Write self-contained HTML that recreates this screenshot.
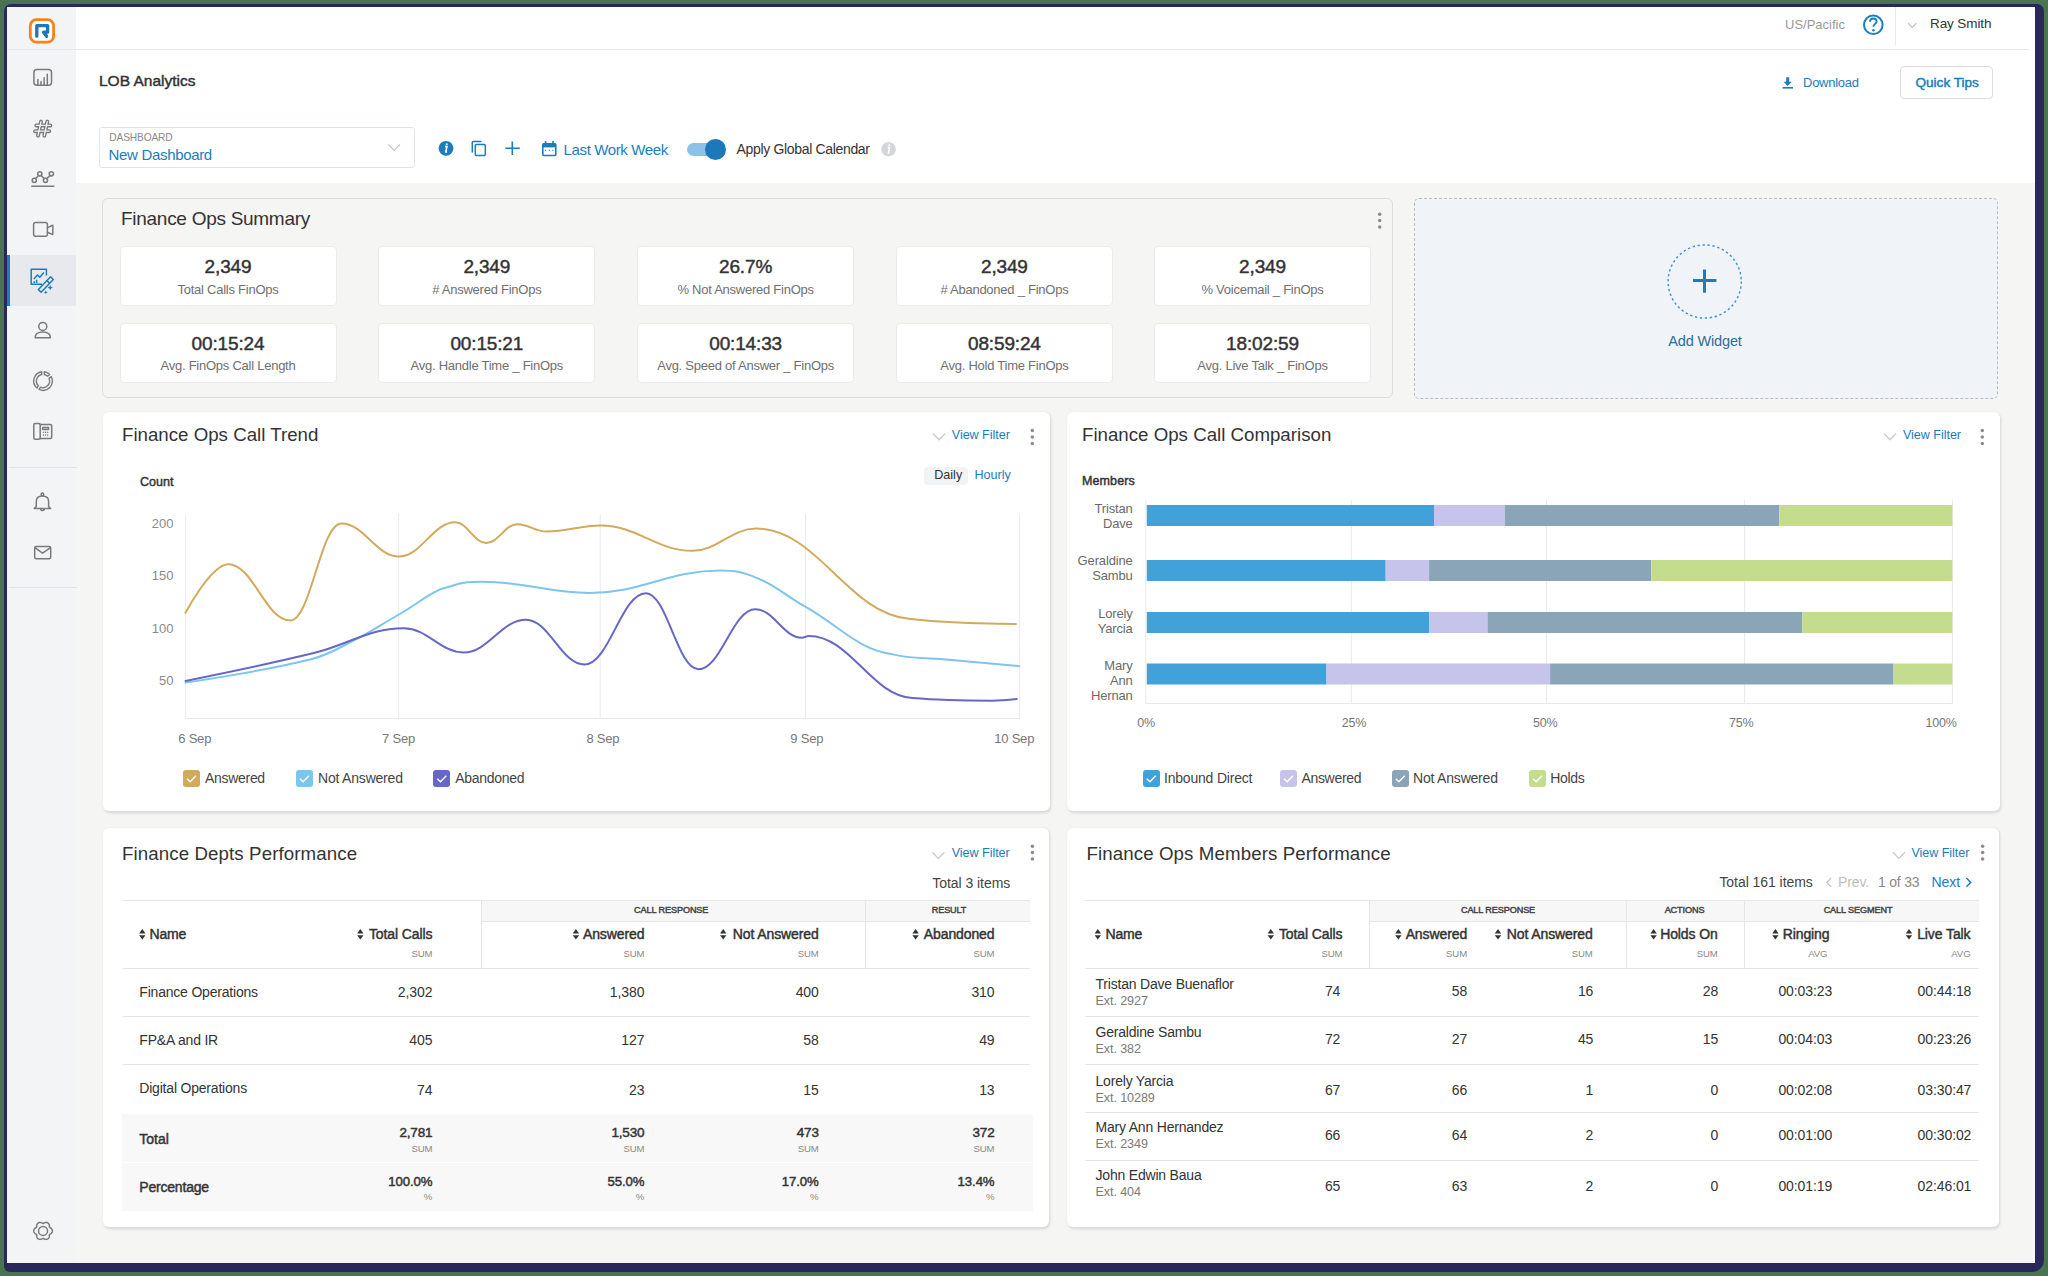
<!DOCTYPE html><html><head><meta charset="utf-8"><style>
html,body{margin:0;padding:0;}
body{width:2048px;height:1276px;overflow:hidden;position:relative;background:#4a7350;font-family:"Liberation Sans",sans-serif;color:#333;}
.t{position:absolute;white-space:nowrap;line-height:1;}
.b{position:absolute;}
svg{position:absolute;left:0;top:0;overflow:visible;}
</style></head><body>
<div class="b" style="left:4px;top:4px;width:2040px;height:1268px;background:#29285a;border-radius:7px 7px 12px 6px;"></div>
<div class="b" style="left:7px;top:7px;width:2028px;height:1256px;background:#f5f5f3;"></div>
<div class="b" style="left:7px;top:7px;width:69px;height:1256px;background:#f3f4f6;"></div>
<div class="b" style="left:7px;top:49px;width:69px;height:1px;background:#e6e8eb;"></div>
<div class="b" style="left:7px;top:255px;width:69px;height:51px;background:#e7e9ec;"></div>
<div class="b" style="left:7px;top:255px;width:3px;height:51px;background:#1a7dc0;"></div>
<div class="b" style="left:9px;top:467px;width:68px;height:1px;background:#e3e5e8;"></div>
<div class="b" style="left:9px;top:587px;width:68px;height:1px;background:#e3e5e8;"></div>
<div class="b" style="left:76px;top:7px;width:1959px;height:176px;background:#ffffff;"></div>
<div class="b" style="left:76px;top:49px;width:1953px;height:1px;background:#e9e9e9;"></div>
<div class="b" style="left:1895px;top:7px;width:1px;height:38px;background:#e9e9e9;"></div>
<svg width="2048" height="1276" style="pointer-events:none">
<rect x="30.3" y="19.7" width="23.3" height="22.5" rx="6.2" fill="#fff" stroke="#f7821b" stroke-width="2.8"/>
<path d="M36.8,36.2 V25.6 H47.6 V32.2 H43.6 L46.6,36.3" fill="none" stroke="#1778bd" stroke-width="3.3" stroke-linecap="round" stroke-linejoin="round"/>
<g fill="none" stroke="#7a7a7a" stroke-width="1.5" stroke-linecap="round" stroke-linejoin="round">
<rect x="33.9" y="69.4" width="17.6" height="15.9" rx="3"/>
<path d="M37.9,85 V79.6 M41,85 V81.4 M44.1,85 V77.7 M47.3,85 V74.3"/>
<path d="M31.8,186.3 H53.8"/>
<circle cx="34.3" cy="180.3" r="2.1"/><circle cx="39.8" cy="173.8" r="2.1"/><circle cx="45.5" cy="180.3" r="2.1"/><circle cx="51.3" cy="173.8" r="2.1"/>
<path d="M35.6,178.6 L38.6,175.5 M41,175.5 L44.3,178.6 M46.7,178.6 L50.1,175.5"/>
<rect x="33.6" y="222.6" width="13.8" height="13.6" rx="2"/>
<path d="M47.4,227.6 L52.8,225.3 V234.6 L47.4,232.2"/>
<circle cx="42.8" cy="326.4" r="4"/>
<path d="M35.2,337.8 C35.2,333.6 38.5,332 42.8,332 C47,332 50.4,333.6 50.4,337.8 Z"/>
<rect x="33.8" y="423.6" width="6.4" height="15.6" rx="1.5"/>
<path d="M40.2,424.6 H50.3 C51.1,424.6 51.7,425.2 51.7,426 V437.2 C51.7,438 51.1,438.6 50.3,438.6 H40.2"/>
<rect x="42.6" y="427.6" width="6" height="1.8" rx="0.5"/>
<path d="M43.5,432.2 V432.4 M45.6,432.2 V432.4 M47.7,432.2 V432.4 M43.5,435 V435.2 M45.6,435 V435.2 M47.7,435 V435.2" stroke-width="1.3"/>
<path d="M34.3,508.6 L36.3,506.4 V501.2 C36.3,497.6 38.6,495.9 42.4,495.9 C46.2,495.9 48.6,497.6 48.6,501.2 V506.4 L50.6,508.6 Z"/>
<circle cx="42.4" cy="494.4" r="1.3"/><path d="M40.7,509.2 A1.8,1.8 0 0 0 44.2,509.2"/>
<rect x="34.7" y="546.4" width="16" height="12.4" rx="1.5"/>
<path d="M34.9,547.6 L42.6,553.2 L50.4,547.6"/>
<path d="M52.35,1230.90 L52.32,1231.30 L52.24,1231.70 L52.11,1232.09 L51.93,1232.47 L51.71,1232.82 L51.45,1233.15 L51.16,1233.46 L50.84,1233.73 L50.50,1233.98 L50.15,1234.21 L49.79,1234.41 L49.46,1234.60 L49.46,1234.98 L49.46,1235.39 L49.44,1235.81 L49.40,1236.23 L49.32,1236.64 L49.20,1237.05 L49.04,1237.44 L48.85,1237.81 L48.62,1238.15 L48.34,1238.46 L48.04,1238.73 L47.70,1238.95 L47.34,1239.13 L46.95,1239.26 L46.55,1239.35 L46.14,1239.38 L45.72,1239.36 L45.30,1239.30 L44.89,1239.20 L44.49,1239.06 L44.10,1238.89 L43.73,1238.70 L43.38,1238.50 L43.05,1238.30 L42.72,1238.50 L42.37,1238.70 L42.00,1238.89 L41.61,1239.06 L41.21,1239.20 L40.80,1239.30 L40.38,1239.36 L39.96,1239.38 L39.55,1239.35 L39.15,1239.26 L38.76,1239.13 L38.40,1238.95 L38.06,1238.73 L37.76,1238.46 L37.48,1238.15 L37.25,1237.81 L37.06,1237.44 L36.90,1237.05 L36.78,1236.64 L36.70,1236.23 L36.66,1235.81 L36.64,1235.39 L36.64,1234.98 L36.64,1234.60 L36.31,1234.41 L35.95,1234.21 L35.60,1233.98 L35.26,1233.73 L34.94,1233.46 L34.65,1233.15 L34.39,1232.82 L34.17,1232.47 L33.99,1232.09 L33.86,1231.70 L33.78,1231.30 L33.75,1230.90 L33.78,1230.50 L33.86,1230.10 L33.99,1229.71 L34.17,1229.33 L34.39,1228.98 L34.65,1228.65 L34.94,1228.34 L35.26,1228.07 L35.60,1227.82 L35.95,1227.59 L36.31,1227.39 L36.64,1227.20 L36.64,1226.82 L36.64,1226.41 L36.66,1225.99 L36.70,1225.57 L36.78,1225.16 L36.90,1224.75 L37.06,1224.36 L37.25,1223.99 L37.48,1223.65 L37.76,1223.34 L38.06,1223.07 L38.40,1222.85 L38.76,1222.67 L39.15,1222.54 L39.55,1222.45 L39.96,1222.42 L40.38,1222.44 L40.80,1222.50 L41.21,1222.60 L41.61,1222.74 L42.00,1222.91 L42.37,1223.10 L42.72,1223.30 L43.05,1223.50 L43.38,1223.30 L43.73,1223.10 L44.10,1222.91 L44.49,1222.74 L44.89,1222.60 L45.30,1222.50 L45.72,1222.44 L46.14,1222.42 L46.55,1222.45 L46.95,1222.54 L47.34,1222.67 L47.70,1222.85 L48.04,1223.07 L48.34,1223.34 L48.62,1223.65 L48.85,1223.99 L49.04,1224.36 L49.20,1224.75 L49.32,1225.16 L49.40,1225.57 L49.44,1225.99 L49.46,1226.41 L49.46,1226.82 L49.46,1227.20 L49.79,1227.39 L50.15,1227.59 L50.50,1227.82 L50.84,1228.07 L51.16,1228.34 L51.45,1228.65 L51.71,1228.98 L51.93,1229.33 L52.11,1229.71 L52.24,1230.10 L52.32,1230.50 L52.35,1230.90Z"/>
<circle cx="43.05" cy="1230.9" r="4.5"/>
</g>
<path d="M44.30,371.79 A9.3,9.3 0 0 1 49.69,374.54 L47.48,376.15 A6.6,6.6 0 0 0 44.29,374.53 Z M51.21,376.64 A9.3,9.3 0 0 1 39.07,389.43 L40.56,387.13 A6.6,6.6 0 0 0 49.00,378.24 Z M36.90,388.02 A9.3,9.3 0 0 1 41.70,371.79 L41.71,374.53 A6.6,6.6 0 0 0 38.39,385.72 Z " fill="none" stroke="#7a7a7a" stroke-width="1.4" stroke-linejoin="round"/>
<g fill="none" stroke="#7a7a7a" stroke-width="4" stroke-linecap="round" stroke-linejoin="round"><path d="M41,121.6 L38,135.6 M47.3,121.6 L44.3,135.6 M36.3,125.4 H50.4 M35.1,131.2 H49.2"/></g>
<g fill="none" stroke="#f3f4f6" stroke-width="1.3" stroke-linecap="round"><path d="M41,121.6 L38,135.6 M47.3,121.6 L44.3,135.6 M36.3,125.4 H50.4 M35.1,131.2 H49.2"/></g>
<g fill="none" stroke="#1b7cc0" stroke-width="1.5" stroke-linejoin="round">
<path d="M42,284.3 H31.2 V269.2 H46.4 V275.5"/>
<path d="M33.8,279 L37.5,275 L39.8,277.2 L43.8,272.5"/>
<path d="M38.4,289.6 L50.6,276.8 L53.3,279.5 L41.1,292.3 Z"/>
<path d="M46.9,280.6 L49.6,283.3"/>
<path d="M34.2,283 V281.2 M36.6,283 V279.8"/>
</g>
<g fill="#1b7cc0"><path d="M50.2,285 l0.8,1.8 1.8,0.8 -1.8,0.8 -0.8,1.8 -0.8,-1.8 -1.8,-0.8 1.8,-0.8z"/><path d="M45.8,290.4 l0.6,1.3 1.3,0.6 -1.3,0.6 -0.6,1.3 -0.6,-1.3 -1.3,-0.6 1.3,-0.6z"/></g>
</svg>
<div class="t" style="top:18.0px;font-size:13px;color:#9a9a9a;left:1785.0px;">US/Pacific</div>
<svg width="2048" height="1276"><g fill="none" stroke="#1a7dc0" stroke-width="2"><circle cx="1873.3" cy="24.8" r="9.3"/>
<path d="M1870,21.8 C1870,19.6 1871.5,18.5 1873.3,18.5 C1875.2,18.5 1876.6,19.7 1876.6,21.5 C1876.6,23.8 1873.4,24 1873.4,26.8" stroke-width="1.9"/></g>
<circle cx="1873.4" cy="30.2" r="1.2" fill="#1a7dc0"/>
<path d="M1908,23 L1912.2,27.5 L1916.4,23" fill="none" stroke="#c4c4c4" stroke-width="1.2"/>
</svg>
<div class="t" style="top:16.6px;font-size:13.5px;letter-spacing:-0.1px;left:1930.0px;">Ray Smith</div>
<div class="t" style="top:72.5px;font-size:15.5px;-webkit-text-stroke:0.45px currentColor;letter-spacing:0px;left:99.0px;">LOB Analytics</div>
<svg width="2048" height="1276"><g fill="#1a7dc0">
<path d="M1786.2,77.2 H1789.2 V81.8 H1791.8 L1787.7,86 L1783.6,81.8 H1786.2 Z"/><rect x="1782.6" y="87" width="10.4" height="1.6"/></g></svg>
<div class="t" style="top:76.0px;font-size:13px;color:#1a7dc0;letter-spacing:-0.25px;left:1803.0px;">Download</div>
<div class="b" style="left:1900px;top:66px;width:93px;height:33px;background:#fff;border:1px solid #dcdcdc;border-radius:4px;box-sizing:border-box;"></div>
<div class="t" style="top:75.8px;font-size:13.6px;color:#1a7dc0;-webkit-text-stroke:0.45px currentColor;letter-spacing:0px;left:1947.2px;transform:translateX(-50%);">Quick Tips</div>
<div class="b" style="left:99px;top:127px;width:316px;height:41px;background:#fff;border:1px solid #dfe4e8;border-radius:3px;box-sizing:border-box;"></div>
<div class="t" style="top:133.4px;font-size:10.2px;color:#8a8a8a;letter-spacing:-0.15px;left:109.3px;">DASHBOARD</div>
<div class="t" style="top:146.9px;font-size:15px;color:#1a7dc0;letter-spacing:-0.33px;left:108.6px;">New Dashboard</div>
<svg width="2048" height="1276">
<path d="M388.4,144.4 L394.2,150.4 L400,144.4" fill="none" stroke="#c7c7c7" stroke-width="1.3"/>
<circle cx="446" cy="148.3" r="7.4" fill="#1a7dc0"/>
<path d="M445.1,146.6 h1.8 l-1.1,5.3 h1.3" fill="none" stroke="#fff" stroke-width="1.6"/><circle cx="446.7" cy="144.3" r="1.05" fill="#fff"/>
<g fill="none" stroke="#1a7dc0" stroke-width="1.5"><rect x="475.3" y="144.6" width="10" height="11" rx="1"/><path d="M472.3,152.6 V142.6 C472.3,142 472.7,141.6 473.3,141.6 H481.5"/></g>
<path d="M512.3,141.4 V155 M505.3,148.2 H519.8" stroke="#1a7dc0" stroke-width="1.6" fill="none"/>
<g fill="none" stroke="#1a7dc0" stroke-width="1.6"><rect x="542.8" y="143.8" width="13" height="11.7" rx="1"/></g>
<rect x="542.8" y="143.8" width="13" height="3.6" fill="#1a7dc0"/>
<path d="M545.6,141 v3 M553,141 v3" stroke="#1a7dc0" stroke-width="1.6"/>
<path d="M545.2,150.3 h1 M548.8,150.3 h1 M552.4,150.3 h1" stroke="#1a7dc0" stroke-width="1.2"/>
</svg>
<div class="t" style="top:142.3px;font-size:15px;color:#1a7dc0;letter-spacing:-0.38px;left:563.6px;">Last Work Week</div>
<div class="b" style="left:687px;top:142.5px;width:36px;height:13.5px;background:#8cc2e8;border-radius:7px;"></div>
<div class="b" style="left:705.4px;top:138.9px;width:21px;height:21px;border-radius:50%;background:#1a78bb;"></div>
<div class="t" style="top:141.9px;font-size:14px;letter-spacing:-0.33px;left:736.5px;">Apply Global Calendar</div>
<svg width="2048" height="1276"><circle cx="888.6" cy="149.2" r="7.3" fill="#d3d6da"/>
<path d="M887.7,147.5 h1.8 l-1.1,5.3 h1.3" fill="none" stroke="#fff" stroke-width="1.5"/><circle cx="889.3" cy="145.3" r="1" fill="#fff"/></svg>
<div class="b" style="left:102px;top:198px;width:1290.5px;height:200px;background:transparent;border:1px solid #dcdde0;border-radius:6px;box-sizing:border-box;"></div>
<div class="t" style="top:208.5px;font-size:19px;letter-spacing:-0.28px;left:121.0px;">Finance Ops Summary</div>
<svg width="2048" height="1276"><g fill="#8c8c8c"><circle cx="1379.7" cy="214.2" r="1.75"/><circle cx="1379.7" cy="220.6" r="1.75"/><circle cx="1379.7" cy="227.0" r="1.75"/></g></svg>
<div class="b" style="left:120.5px;top:247px;width:215.0px;height:58px;background:#fff;border-radius:4px;box-shadow:0 0 0 1px #ebebeb;"></div>
<div class="t" style="top:257.3px;font-size:19px;-webkit-text-stroke:0.45px currentColor;letter-spacing:-0.15px;left:228.0px;transform:translateX(-50%);">2,349</div>
<div class="t" style="top:282.6px;font-size:13px;color:#6f6f6f;letter-spacing:-0.25px;left:228.0px;transform:translateX(-50%);">Total Calls FinOps</div>
<div class="b" style="left:379.3px;top:247px;width:214.99999999999994px;height:58px;background:#fff;border-radius:4px;box-shadow:0 0 0 1px #ebebeb;"></div>
<div class="t" style="top:257.3px;font-size:19px;-webkit-text-stroke:0.45px currentColor;letter-spacing:-0.15px;left:486.8px;transform:translateX(-50%);">2,349</div>
<div class="t" style="top:282.6px;font-size:13px;color:#6f6f6f;letter-spacing:-0.25px;left:486.8px;transform:translateX(-50%);"># Answered FinOps</div>
<div class="b" style="left:638.1px;top:247px;width:215.0px;height:58px;background:#fff;border-radius:4px;box-shadow:0 0 0 1px #ebebeb;"></div>
<div class="t" style="top:257.3px;font-size:19px;-webkit-text-stroke:0.45px currentColor;letter-spacing:-0.15px;left:745.6px;transform:translateX(-50%);">26.7%</div>
<div class="t" style="top:282.6px;font-size:13px;color:#6f6f6f;letter-spacing:-0.25px;left:745.6px;transform:translateX(-50%);">% Not Answered FinOps</div>
<div class="b" style="left:896.9px;top:247px;width:215.0000000000001px;height:58px;background:#fff;border-radius:4px;box-shadow:0 0 0 1px #ebebeb;"></div>
<div class="t" style="top:257.3px;font-size:19px;-webkit-text-stroke:0.45px currentColor;letter-spacing:-0.15px;left:1004.4px;transform:translateX(-50%);">2,349</div>
<div class="t" style="top:282.6px;font-size:13px;color:#6f6f6f;letter-spacing:-0.25px;left:1004.4px;transform:translateX(-50%);"># Abandoned _ FinOps</div>
<div class="b" style="left:1155px;top:247px;width:215px;height:58px;background:#fff;border-radius:4px;box-shadow:0 0 0 1px #ebebeb;"></div>
<div class="t" style="top:257.3px;font-size:19px;-webkit-text-stroke:0.45px currentColor;letter-spacing:-0.15px;left:1262.5px;transform:translateX(-50%);">2,349</div>
<div class="t" style="top:282.6px;font-size:13px;color:#6f6f6f;letter-spacing:-0.25px;left:1262.5px;transform:translateX(-50%);">% Voicemail _ FinOps</div>
<div class="b" style="left:120.5px;top:323.5px;width:215.0px;height:58.0px;background:#fff;border-radius:4px;box-shadow:0 0 0 1px #ebebeb;"></div>
<div class="t" style="top:333.8px;font-size:19px;-webkit-text-stroke:0.45px currentColor;letter-spacing:-0.15px;left:228.0px;transform:translateX(-50%);">00:15:24</div>
<div class="t" style="top:359.1px;font-size:13px;color:#6f6f6f;letter-spacing:-0.25px;left:228.0px;transform:translateX(-50%);">Avg. FinOps Call Length</div>
<div class="b" style="left:379.3px;top:323.5px;width:214.99999999999994px;height:58.0px;background:#fff;border-radius:4px;box-shadow:0 0 0 1px #ebebeb;"></div>
<div class="t" style="top:333.8px;font-size:19px;-webkit-text-stroke:0.45px currentColor;letter-spacing:-0.15px;left:486.8px;transform:translateX(-50%);">00:15:21</div>
<div class="t" style="top:359.1px;font-size:13px;color:#6f6f6f;letter-spacing:-0.25px;left:486.8px;transform:translateX(-50%);">Avg. Handle Time _ FinOps</div>
<div class="b" style="left:638.1px;top:323.5px;width:215.0px;height:58.0px;background:#fff;border-radius:4px;box-shadow:0 0 0 1px #ebebeb;"></div>
<div class="t" style="top:333.8px;font-size:19px;-webkit-text-stroke:0.45px currentColor;letter-spacing:-0.15px;left:745.6px;transform:translateX(-50%);">00:14:33</div>
<div class="t" style="top:359.1px;font-size:13px;color:#6f6f6f;letter-spacing:-0.25px;left:745.6px;transform:translateX(-50%);">Avg. Speed of Answer _ FinOps</div>
<div class="b" style="left:896.9px;top:323.5px;width:215.0000000000001px;height:58.0px;background:#fff;border-radius:4px;box-shadow:0 0 0 1px #ebebeb;"></div>
<div class="t" style="top:333.8px;font-size:19px;-webkit-text-stroke:0.45px currentColor;letter-spacing:-0.15px;left:1004.4px;transform:translateX(-50%);">08:59:24</div>
<div class="t" style="top:359.1px;font-size:13px;color:#6f6f6f;letter-spacing:-0.25px;left:1004.4px;transform:translateX(-50%);">Avg. Hold Time FinOps</div>
<div class="b" style="left:1155px;top:323.5px;width:215px;height:58.0px;background:#fff;border-radius:4px;box-shadow:0 0 0 1px #ebebeb;"></div>
<div class="t" style="top:333.8px;font-size:19px;-webkit-text-stroke:0.45px currentColor;letter-spacing:-0.15px;left:1262.5px;transform:translateX(-50%);">18:02:59</div>
<div class="t" style="top:359.1px;font-size:13px;color:#6f6f6f;letter-spacing:-0.25px;left:1262.5px;transform:translateX(-50%);">Avg. Live Talk _ FinOps</div>
<div class="b" style="left:1413.5px;top:197.5px;width:584.0px;height:201.0px;background:#f0f4f8;border:1px dashed #b9bcc0;border-radius:5px;box-sizing:border-box;"></div>
<svg width="2048" height="1276"><circle cx="1704.7" cy="281.5" r="36.6" fill="none" stroke="#3a96d2" stroke-width="1.5" stroke-dasharray="2.3 2.7"/>
<path d="M1704.5,269.6 V292.8 M1693,280.5 H1716.4" stroke="#1a7dc0" stroke-width="3" fill="none"/></svg>
<div class="t" style="top:333.7px;font-size:14.5px;color:#2c6d9c;letter-spacing:-0.15px;left:1705.0px;transform:translateX(-50%);">Add Widget</div>
<div class="b" style="left:103px;top:412px;width:947px;height:399px;background:#fff;border-radius:6px;box-shadow:1px 1.5px 3px rgba(0,0,0,0.13);"></div>
<div class="b" style="left:1067px;top:412px;width:933px;height:399px;background:#fff;border-radius:6px;box-shadow:1px 1.5px 3px rgba(0,0,0,0.13);"></div>
<div class="b" style="left:103px;top:828px;width:946px;height:399px;background:#fff;border-radius:6px;box-shadow:1px 1.5px 3px rgba(0,0,0,0.13);"></div>
<div class="b" style="left:1067px;top:828px;width:932px;height:399px;background:#fff;border-radius:6px;box-shadow:1px 1.5px 3px rgba(0,0,0,0.13);"></div>
<div class="t" style="top:426.2px;font-size:18.7px;letter-spacing:0px;left:122.0px;">Finance Ops Call Trend</div>
<svg width="2048" height="1276"><path d="M933,433.59999999999997 L939,439.79999999999995 L945,433.59999999999997" fill="none" stroke="#c8c8c8" stroke-width="1.3"/></svg>
<div class="t" style="top:428.7px;font-size:12.6px;color:#1a7dc0;letter-spacing:-0.05px;left:951.8px;">View Filter</div>
<svg width="2048" height="1276"><g fill="#8c8c8c"><circle cx="1032.3" cy="430.6" r="1.75"/><circle cx="1032.3" cy="437.0" r="1.75"/><circle cx="1032.3" cy="443.40000000000003" r="1.75"/></g></svg>
<div class="b" style="left:924.4px;top:467px;width:44.0px;height:17.69999999999999px;background:#f1f3f5;border-radius:4px;"></div>
<div class="t" style="top:469.3px;font-size:12.6px;left:934.2px;">Daily</div>
<div class="t" style="top:469.3px;font-size:12.6px;color:#1a7dc0;left:974.4px;">Hourly</div>
<div class="t" style="top:475.7px;font-size:12.5px;-webkit-text-stroke:0.45px currentColor;letter-spacing:0px;left:140.0px;">Count</div>
<div class="t" style="top:517.4px;font-size:13px;color:#8a8a8a;right:1874.6px;">200</div>
<div class="t" style="top:569.4px;font-size:13px;color:#8a8a8a;right:1874.6px;">150</div>
<div class="t" style="top:622.3px;font-size:13px;color:#8a8a8a;right:1874.6px;">100</div>
<div class="t" style="top:674.0px;font-size:13px;color:#8a8a8a;right:1874.6px;">50</div>
<svg width="2048" height="1276"><g stroke="#e9e9e9" stroke-width="1" fill="none"><path d="M185.6,514 V718.5"/><path d="M398.6,514 V718.5"/><path d="M600.2,514 V718.5"/><path d="M805.4,514 V718.5"/><path d="M1019.7,514 V718.5"/><path d="M185.6,718.5 H1019.7"/></g><g fill="none" stroke-width="2" stroke-linecap="round" stroke-linejoin="round"><path d="M185.5,682.6 C185.5,682.6 260.8,671.8 311.0,659.3 C327.6,655.2 335.8,649.6 352.4,641.2 C371.0,631.7 380.4,624.9 399.0,614.5 C420.1,602.8 430.6,590.3 451.7,586.0 C464.1,581.7 470.4,581.7 482.8,581.7 C525.6,581.7 546.9,592.9 589.7,592.9 C641.8,592.9 667.9,570.5 720.0,570.5 C735.2,570.5 742.7,571.9 757.9,578.3 C776.9,586.3 786.3,596.0 805.3,606.7 C839.9,626.3 857.1,648.9 891.7,654.1 C912.4,659.3 922.7,657.3 943.4,659.3 C973.8,662.2 1019.3,666.2 1019.3,666.2" stroke="#7cc6ee"/><path d="M185.5,612.8 C185.5,612.8 211.2,564.2 228.3,564.2 C253.1,564.2 265.5,620.6 290.3,620.6 C310.7,620.6 320.8,523.4 341.2,523.4 C364.3,523.4 375.9,556.5 399.0,556.5 C421.5,556.5 432.7,522.2 455.2,522.2 C467.6,522.2 473.8,543.0 486.2,543.0 C498.6,543.0 504.8,524.2 517.2,524.2 C529.0,524.2 534.8,531.6 546.6,531.6 C568.3,531.6 579.2,525.6 600.9,525.6 C637.5,525.6 655.8,550.8 692.4,550.8 C717.9,550.8 730.7,528.6 756.2,528.6 C817.3,528.6 847.9,613.6 909.0,618.8 C951.8,624.0 1015.9,624.0 1015.9,624.0" stroke="#d3aa5c"/><path d="M185.5,680.9 C185.5,680.9 261.9,665.6 312.8,653.3 C349.3,644.5 367.6,628.3 404.1,628.3 C428.0,628.3 439.9,652.4 463.8,652.4 C488.6,652.4 501.1,619.7 525.9,619.7 C549.3,619.7 561.1,664.6 584.5,664.6 C609.1,664.6 621.3,593.2 645.9,593.2 C666.9,593.2 677.4,669.2 698.4,669.2 C721.2,669.2 732.5,609.2 755.3,609.2 C773.9,609.2 783.3,637.8 801.9,637.8 C804.7,637.8 806.0,636.0 808.8,636.0 C850.2,636.0 871.0,695.5 912.4,698.1 C944.1,700.7 960.0,700.7 991.7,700.7 C1001.7,700.7 1016.7,699.0 1016.7,699.0" stroke="#6767c6"/></g></svg>
<div class="t" style="top:731.6px;font-size:13px;color:#777;letter-spacing:-0.2px;left:194.7px;transform:translateX(-50%);">6 Sep</div>
<div class="t" style="top:731.6px;font-size:13px;color:#777;letter-spacing:-0.2px;left:398.5px;transform:translateX(-50%);">7 Sep</div>
<div class="t" style="top:731.6px;font-size:13px;color:#777;letter-spacing:-0.2px;left:602.9px;transform:translateX(-50%);">8 Sep</div>
<div class="t" style="top:731.6px;font-size:13px;color:#777;letter-spacing:-0.2px;left:806.8px;transform:translateX(-50%);">9 Sep</div>
<div class="t" style="top:731.6px;font-size:13px;color:#777;letter-spacing:-0.2px;left:1014.2px;transform:translateX(-50%);">10 Sep</div>
<div class="b" style="left:183px;top:770px;width:17px;height:17px;border-radius:3px;background:#d3aa5c;"></div>
<svg width="2048" height="1276"><path d="M187,778.8 L190.2,781.8 L196,775.8" fill="none" stroke="#fff" stroke-width="1.4"/></svg>
<div class="t" style="top:771.4px;font-size:14px;color:#444;letter-spacing:-0.3px;left:205.0px;">Answered</div>
<div class="b" style="left:296px;top:770px;width:17px;height:17px;border-radius:3px;background:#7cc6ee;"></div>
<svg width="2048" height="1276"><path d="M300,778.8 L303.2,781.8 L309,775.8" fill="none" stroke="#fff" stroke-width="1.4"/></svg>
<div class="t" style="top:771.4px;font-size:14px;color:#444;letter-spacing:-0.2px;left:318.0px;">Not Answered</div>
<div class="b" style="left:433.3px;top:770px;width:17px;height:17px;border-radius:3px;background:#6767c6;"></div>
<svg width="2048" height="1276"><path d="M437.3,778.8 L440.5,781.8 L446.3,775.8" fill="none" stroke="#fff" stroke-width="1.4"/></svg>
<div class="t" style="top:771.4px;font-size:14px;color:#444;letter-spacing:-0.3px;left:455.2px;">Abandoned</div>
<div class="t" style="top:426.2px;font-size:18.7px;letter-spacing:0px;left:1082.0px;">Finance Ops Call Comparison</div>
<svg width="2048" height="1276"><path d="M1884,433.59999999999997 L1890,439.79999999999995 L1896,433.59999999999997" fill="none" stroke="#c8c8c8" stroke-width="1.3"/></svg>
<div class="t" style="top:428.7px;font-size:12.6px;color:#1a7dc0;letter-spacing:-0.05px;left:1903.0px;">View Filter</div>
<svg width="2048" height="1276"><g fill="#8c8c8c"><circle cx="1982.3" cy="430.6" r="1.75"/><circle cx="1982.3" cy="437.0" r="1.75"/><circle cx="1982.3" cy="443.40000000000003" r="1.75"/></g></svg>
<div class="t" style="top:474.9px;font-size:12.5px;-webkit-text-stroke:0.45px currentColor;letter-spacing:0.1px;left:1082.0px;">Members</div>
<svg width="2048" height="1276"><g stroke="#e9e9e9" stroke-width="1" fill="none"><path d="M1145.8,499.6 V703.5"/><path d="M1351.3,499.6 V703.5"/><path d="M1546.6,499.6 V703.5"/><path d="M1744.6,499.6 V703.5"/><path d="M1952.4,499.6 V703.5"/><path d="M1145.8,703.5 H1952.4"/></g><rect x="1146.8" y="505" width="287.2" height="21" fill="#43a1d9"/><rect x="1434" y="505" width="70.8" height="21" fill="#c6c4ea"/><rect x="1504.8" y="505" width="274.4" height="21" fill="#8aa5b7"/><rect x="1779.2" y="505" width="173.2" height="21" fill="#c3dc8d"/><rect x="1146.8" y="560" width="238.9" height="21" fill="#43a1d9"/><rect x="1385.7" y="560" width="43.4" height="21" fill="#c6c4ea"/><rect x="1429.1" y="560" width="222.2" height="21" fill="#8aa5b7"/><rect x="1651.3" y="560" width="301.1" height="21" fill="#c3dc8d"/><rect x="1146.8" y="612" width="282.3" height="21" fill="#43a1d9"/><rect x="1429.1" y="612" width="58.4" height="21" fill="#c6c4ea"/><rect x="1487.5" y="612" width="314.9" height="21" fill="#8aa5b7"/><rect x="1802.4" y="612" width="150.0" height="21" fill="#c3dc8d"/><rect x="1146.8" y="663.5" width="179.7" height="21" fill="#43a1d9"/><rect x="1326.5" y="663.5" width="223.6" height="21" fill="#c6c4ea"/><rect x="1550.1" y="663.5" width="342.9" height="21" fill="#8aa5b7"/><rect x="1893" y="663.5" width="59.4" height="21" fill="#c3dc8d"/></svg>
<div class="t" style="top:502.0px;font-size:13px;color:#6a6a6a;letter-spacing:-0.15px;right:915.5px;margin-right:-0.15px;">Tristan</div>
<div class="t" style="top:516.6px;font-size:13px;color:#6a6a6a;letter-spacing:-0.15px;right:915.5px;margin-right:-0.15px;">Dave</div>
<div class="t" style="top:553.9px;font-size:13px;color:#6a6a6a;letter-spacing:-0.15px;right:915.5px;margin-right:-0.15px;">Geraldine</div>
<div class="t" style="top:568.6px;font-size:13px;color:#6a6a6a;letter-spacing:-0.15px;right:915.5px;margin-right:-0.15px;">Sambu</div>
<div class="t" style="top:607.2px;font-size:13px;color:#6a6a6a;letter-spacing:-0.15px;right:915.5px;margin-right:-0.15px;">Lorely</div>
<div class="t" style="top:621.9px;font-size:13px;color:#6a6a6a;letter-spacing:-0.15px;right:915.5px;margin-right:-0.15px;">Yarcia</div>
<div class="t" style="top:659.2px;font-size:13px;color:#6a6a6a;letter-spacing:-0.15px;right:915.5px;margin-right:-0.15px;">Mary</div>
<div class="t" style="top:673.8px;font-size:13px;color:#6a6a6a;letter-spacing:-0.15px;right:915.5px;margin-right:-0.15px;">Ann</div>
<div class="t" style="top:688.5px;font-size:13px;color:#6a6a6a;letter-spacing:-0.15px;right:915.5px;margin-right:-0.15px;">Hernan</div>
<div class="t" style="top:716.9px;font-size:12.5px;color:#777;letter-spacing:-0.2px;left:1146.2px;transform:translateX(-50%);">0%</div>
<div class="t" style="top:716.9px;font-size:12.5px;color:#777;letter-spacing:-0.2px;left:1353.9px;transform:translateX(-50%);">25%</div>
<div class="t" style="top:716.9px;font-size:12.5px;color:#777;letter-spacing:-0.2px;left:1545.2px;transform:translateX(-50%);">50%</div>
<div class="t" style="top:716.9px;font-size:12.5px;color:#777;letter-spacing:-0.2px;left:1741.3px;transform:translateX(-50%);">75%</div>
<div class="t" style="top:716.9px;font-size:12.5px;color:#777;letter-spacing:-0.2px;left:1941.2px;transform:translateX(-50%);">100%</div>
<div class="b" style="left:1142.7px;top:770px;width:17px;height:17px;border-radius:3px;background:#43a1d9;"></div>
<svg width="2048" height="1276"><path d="M1146.7,778.8 L1149.9,781.8 L1155.7,775.8" fill="none" stroke="#fff" stroke-width="1.4"/></svg>
<div class="t" style="top:771.4px;font-size:14px;color:#444;letter-spacing:-0.2px;left:1164.0px;">Inbound Direct</div>
<div class="b" style="left:1280px;top:770px;width:17px;height:17px;border-radius:3px;background:#c6c4ea;"></div>
<svg width="2048" height="1276"><path d="M1284,778.8 L1287.2,781.8 L1293,775.8" fill="none" stroke="#fff" stroke-width="1.4"/></svg>
<div class="t" style="top:771.4px;font-size:14px;color:#444;letter-spacing:-0.3px;left:1301.4px;">Answered</div>
<div class="b" style="left:1391.7px;top:770px;width:17px;height:17px;border-radius:3px;background:#8aa5b7;"></div>
<svg width="2048" height="1276"><path d="M1395.7,778.8 L1398.9,781.8 L1404.7,775.8" fill="none" stroke="#fff" stroke-width="1.4"/></svg>
<div class="t" style="top:771.4px;font-size:14px;color:#444;letter-spacing:-0.2px;left:1413.0px;">Not Answered</div>
<div class="b" style="left:1529px;top:770px;width:17px;height:17px;border-radius:3px;background:#c3dc8d;"></div>
<svg width="2048" height="1276"><path d="M1533,778.8 L1536.2,781.8 L1542,775.8" fill="none" stroke="#fff" stroke-width="1.4"/></svg>
<div class="t" style="top:771.4px;font-size:14px;color:#444;letter-spacing:-0.3px;left:1550.2px;">Holds</div>
<div class="t" style="top:844.6px;font-size:18.7px;letter-spacing:0.1px;left:122.0px;">Finance Depts Performance</div>
<svg width="2048" height="1276"><path d="M932.4,852.2 L938.4,858.4 L944.4,852.2" fill="none" stroke="#c8c8c8" stroke-width="1.3"/></svg>
<div class="t" style="top:847.3px;font-size:12.6px;color:#1a7dc0;letter-spacing:-0.05px;left:951.7px;">View Filter</div>
<svg width="2048" height="1276"><g fill="#8c8c8c"><circle cx="1032.4" cy="846.2" r="1.75"/><circle cx="1032.4" cy="852.6" r="1.75"/><circle cx="1032.4" cy="859.0" r="1.75"/></g></svg>
<div class="t" style="top:875.7px;font-size:14px;color:#444;letter-spacing:-0.05px;right:1037.8px;margin-right:-0.05px;">Total 3 items</div>
<div class="b" style="left:481.5px;top:900px;width:548.9000000000001px;height:21.5px;background:#f7f7f7;"></div>
<div class="b" style="left:123.4px;top:899.5px;width:907.0000000000001px;height:1.0px;background:#e6e6e6;"></div>
<div class="b" style="left:481.5px;top:921px;width:548.9000000000001px;height:1px;background:#e6e6e6;"></div>
<div class="b" style="left:481px;top:900px;width:1px;height:68.70000000000005px;background:#e6e6e6;"></div>
<div class="b" style="left:865.1px;top:900px;width:1.0px;height:68.70000000000005px;background:#e6e6e6;"></div>
<div class="b" style="left:123.4px;top:968.2px;width:907.0000000000001px;height:1.0px;background:#e6e6e6;"></div>
<div class="t" style="top:905.7px;font-size:9.1px;color:#444;-webkit-text-stroke:0.45px currentColor;letter-spacing:-0.1px;left:671.2px;transform:translateX(-50%);">CALL RESPONSE</div>
<div class="t" style="top:905.7px;font-size:9.1px;color:#444;-webkit-text-stroke:0.45px currentColor;letter-spacing:-0.1px;left:949.0px;transform:translateX(-50%);">RESULT</div>
<svg width="2048" height="1276"><g fill="#333"><path d="M139.10000000000002,933.4 L142.3,929.0 L145.5,933.4 Z"/><path d="M139.10000000000002,935.1999999999999 L142.3,939.5999999999999 L145.5,935.1999999999999 Z"/></g></svg>
<div class="t" style="top:927.0px;font-size:14px;-webkit-text-stroke:0.45px currentColor;letter-spacing:-0.2px;left:149.5px;">Name</div>
<svg width="2048" height="1276"><g fill="#333"><path d="M357.1,933.4 L360.3,929.0 L363.5,933.4 Z"/><path d="M357.1,935.1999999999999 L360.3,939.5999999999999 L363.5,935.1999999999999 Z"/></g></svg>
<div class="t" style="top:927.0px;font-size:14px;-webkit-text-stroke:0.45px currentColor;letter-spacing:-0.1px;right:1615.7px;margin-right:-0.1px;">Total Calls</div>
<div class="t" style="top:948.8px;font-size:9.6px;color:#888;letter-spacing:-0.1px;right:1615.7px;margin-right:-0.1px;">SUM</div>
<svg width="2048" height="1276"><g fill="#333"><path d="M572.6999999999999,933.4 L575.9,929.0 L579.1,933.4 Z"/><path d="M572.6999999999999,935.1999999999999 L575.9,939.5999999999999 L579.1,935.1999999999999 Z"/></g></svg>
<div class="t" style="top:927.0px;font-size:14px;-webkit-text-stroke:0.45px currentColor;letter-spacing:-0.1px;right:1403.7px;margin-right:-0.1px;">Answered</div>
<div class="t" style="top:948.8px;font-size:9.6px;color:#888;letter-spacing:-0.1px;right:1403.7px;margin-right:-0.1px;">SUM</div>
<svg width="2048" height="1276"><g fill="#333"><path d="M720.0,933.4 L723.2,929.0 L726.4000000000001,933.4 Z"/><path d="M720.0,935.1999999999999 L723.2,939.5999999999999 L726.4000000000001,935.1999999999999 Z"/></g></svg>
<div class="t" style="top:927.0px;font-size:14px;-webkit-text-stroke:0.45px currentColor;letter-spacing:-0.1px;right:1229.4px;margin-right:-0.1px;">Not Answered</div>
<div class="t" style="top:948.8px;font-size:9.6px;color:#888;letter-spacing:-0.1px;right:1229.4px;margin-right:-0.1px;">SUM</div>
<svg width="2048" height="1276"><g fill="#333"><path d="M912.4,933.4 L915.6,929.0 L918.8000000000001,933.4 Z"/><path d="M912.4,935.1999999999999 L915.6,939.5999999999999 L918.8000000000001,935.1999999999999 Z"/></g></svg>
<div class="t" style="top:927.0px;font-size:14px;-webkit-text-stroke:0.45px currentColor;letter-spacing:-0.1px;right:1053.6px;margin-right:-0.1px;">Abandoned</div>
<div class="t" style="top:948.8px;font-size:9.6px;color:#888;letter-spacing:-0.1px;right:1053.6px;margin-right:-0.1px;">SUM</div>
<div class="b" style="left:123.4px;top:1016.2px;width:907.0000000000001px;height:1.0px;background:#e6e6e6;"></div>
<div class="b" style="left:123.4px;top:1064px;width:907.0000000000001px;height:1px;background:#e6e6e6;"></div>
<div class="t" style="top:985.2px;font-size:14px;letter-spacing:-0.2px;left:139.3px;">Finance Operations</div>
<div class="t" style="top:984.5px;font-size:14px;letter-spacing:-0.1px;right:1615.7px;margin-right:-0.1px;">2,302</div>
<div class="t" style="top:984.5px;font-size:14px;letter-spacing:-0.1px;right:1403.7px;margin-right:-0.1px;">1,380</div>
<div class="t" style="top:984.5px;font-size:14px;letter-spacing:-0.1px;right:1229.4px;margin-right:-0.1px;">400</div>
<div class="t" style="top:984.5px;font-size:14px;letter-spacing:-0.1px;right:1053.6px;margin-right:-0.1px;">310</div>
<div class="t" style="top:1032.6px;font-size:14px;letter-spacing:-0.2px;left:139.3px;">FP&amp;A and IR</div>
<div class="t" style="top:1032.5px;font-size:14px;letter-spacing:-0.1px;right:1615.7px;margin-right:-0.1px;">405</div>
<div class="t" style="top:1032.5px;font-size:14px;letter-spacing:-0.1px;right:1403.7px;margin-right:-0.1px;">127</div>
<div class="t" style="top:1032.5px;font-size:14px;letter-spacing:-0.1px;right:1229.4px;margin-right:-0.1px;">58</div>
<div class="t" style="top:1032.5px;font-size:14px;letter-spacing:-0.1px;right:1053.6px;margin-right:-0.1px;">49</div>
<div class="t" style="top:1081.1px;font-size:14px;letter-spacing:-0.2px;left:139.3px;">Digital Operations</div>
<div class="t" style="top:1083.1px;font-size:14px;letter-spacing:-0.1px;right:1615.7px;margin-right:-0.1px;">74</div>
<div class="t" style="top:1083.1px;font-size:14px;letter-spacing:-0.1px;right:1403.7px;margin-right:-0.1px;">23</div>
<div class="t" style="top:1083.1px;font-size:14px;letter-spacing:-0.1px;right:1229.4px;margin-right:-0.1px;">15</div>
<div class="t" style="top:1083.1px;font-size:14px;letter-spacing:-0.1px;right:1053.6px;margin-right:-0.1px;">13</div>
<div class="b" style="left:121.8px;top:1114.2px;width:911.2px;height:48.0px;background:#f8f8f8;"></div>
<div class="b" style="left:121.8px;top:1162.6px;width:911.2px;height:48.0px;background:#f8f8f8;"></div>
<div class="t" style="top:1131.6px;font-size:14px;-webkit-text-stroke:0.45px currentColor;letter-spacing:0px;left:139.3px;">Total</div>
<div class="t" style="top:1179.9px;font-size:14px;-webkit-text-stroke:0.45px currentColor;letter-spacing:-0.2px;left:139.3px;">Percentage</div>
<div class="t" style="top:1125.9px;font-size:13.5px;-webkit-text-stroke:0.45px currentColor;letter-spacing:-0.15px;right:1615.7px;margin-right:-0.15px;">2,781</div>
<div class="t" style="top:1143.9px;font-size:9.6px;color:#888;letter-spacing:-0.1px;right:1615.7px;margin-right:-0.1px;">SUM</div>
<div class="t" style="top:1125.9px;font-size:13.5px;-webkit-text-stroke:0.45px currentColor;letter-spacing:-0.15px;right:1403.7px;margin-right:-0.15px;">1,530</div>
<div class="t" style="top:1143.9px;font-size:9.6px;color:#888;letter-spacing:-0.1px;right:1403.7px;margin-right:-0.1px;">SUM</div>
<div class="t" style="top:1125.9px;font-size:13.5px;-webkit-text-stroke:0.45px currentColor;letter-spacing:-0.15px;right:1229.4px;margin-right:-0.15px;">473</div>
<div class="t" style="top:1143.9px;font-size:9.6px;color:#888;letter-spacing:-0.1px;right:1229.4px;margin-right:-0.1px;">SUM</div>
<div class="t" style="top:1125.9px;font-size:13.5px;-webkit-text-stroke:0.45px currentColor;letter-spacing:-0.15px;right:1053.6px;margin-right:-0.15px;">372</div>
<div class="t" style="top:1143.9px;font-size:9.6px;color:#888;letter-spacing:-0.1px;right:1053.6px;margin-right:-0.1px;">SUM</div>
<div class="t" style="top:1174.8px;font-size:13.2px;-webkit-text-stroke:0.45px currentColor;letter-spacing:-0.1px;right:1615.7px;margin-right:-0.1px;">100.0%</div>
<div class="t" style="top:1192.1px;font-size:9.6px;color:#888;right:1615.7px;">%</div>
<div class="t" style="top:1174.8px;font-size:13.2px;-webkit-text-stroke:0.45px currentColor;letter-spacing:-0.1px;right:1403.7px;margin-right:-0.1px;">55.0%</div>
<div class="t" style="top:1192.1px;font-size:9.6px;color:#888;right:1403.7px;">%</div>
<div class="t" style="top:1174.8px;font-size:13.2px;-webkit-text-stroke:0.45px currentColor;letter-spacing:-0.1px;right:1229.4px;margin-right:-0.1px;">17.0%</div>
<div class="t" style="top:1192.1px;font-size:9.6px;color:#888;right:1229.4px;">%</div>
<div class="t" style="top:1174.8px;font-size:13.2px;-webkit-text-stroke:0.45px currentColor;letter-spacing:-0.1px;right:1053.6px;margin-right:-0.1px;">13.4%</div>
<div class="t" style="top:1192.1px;font-size:9.6px;color:#888;right:1053.6px;">%</div>
<div class="t" style="top:844.6px;font-size:18.7px;letter-spacing:0.1px;left:1086.5px;">Finance Ops Members Performance</div>
<svg width="2048" height="1276"><path d="M1892.8,852.2 L1898.8,858.4 L1904.8,852.2" fill="none" stroke="#c8c8c8" stroke-width="1.3"/></svg>
<div class="t" style="top:847.3px;font-size:12.6px;color:#1a7dc0;letter-spacing:-0.05px;left:1911.4px;">View Filter</div>
<svg width="2048" height="1276"><g fill="#8c8c8c"><circle cx="1982.6" cy="846.2" r="1.75"/><circle cx="1982.6" cy="852.6" r="1.75"/><circle cx="1982.6" cy="859.0" r="1.75"/></g></svg>
<div class="t" style="top:875.3px;font-size:14px;color:#444;letter-spacing:-0.05px;left:1719.4px;">Total 161 items</div>
<svg width="2048" height="1276"><path d="M1831,878 L1826.7,882.4 L1831,886.8" fill="none" stroke="#c4c4c4" stroke-width="1.3"/><path d="M1966.4,878 L1970.7,882.4 L1966.4,886.8" fill="none" stroke="#1a7dc0" stroke-width="1.5"/></svg>
<div class="t" style="top:875.3px;font-size:14px;color:#c0c0c0;letter-spacing:-0.1px;left:1837.9px;">Prev.</div>
<div class="t" style="top:875.3px;font-size:14px;color:#8a8a8a;letter-spacing:-0.2px;left:1878.0px;">1 of 33</div>
<div class="t" style="top:875.3px;font-size:14px;color:#1a7dc0;letter-spacing:-0.1px;left:1931.6px;">Next</div>
<div class="b" style="left:1369.3px;top:900px;width:610.2px;height:21.5px;background:#f7f7f7;"></div>
<div class="b" style="left:1084.7px;top:899.5px;width:894.8px;height:1.0px;background:#e6e6e6;"></div>
<div class="b" style="left:1369.3px;top:921px;width:610.2px;height:1px;background:#e6e6e6;"></div>
<div class="b" style="left:1368.8px;top:900px;width:1.0px;height:68.20000000000005px;background:#e6e6e6;"></div>
<div class="b" style="left:1626.2px;top:900px;width:1.0px;height:68.20000000000005px;background:#e6e6e6;"></div>
<div class="b" style="left:1744.2px;top:900px;width:1.0px;height:68.20000000000005px;background:#e6e6e6;"></div>
<div class="b" style="left:1084.7px;top:967.8px;width:894.8px;height:1.0px;background:#e6e6e6;"></div>
<div class="t" style="top:905.7px;font-size:9.1px;color:#444;-webkit-text-stroke:0.45px currentColor;letter-spacing:-0.1px;left:1498.0px;transform:translateX(-50%);">CALL RESPONSE</div>
<div class="t" style="top:905.7px;font-size:9.1px;color:#444;-webkit-text-stroke:0.45px currentColor;letter-spacing:-0.1px;left:1684.5px;transform:translateX(-50%);">ACTIONS</div>
<div class="t" style="top:905.7px;font-size:9.1px;color:#444;-webkit-text-stroke:0.45px currentColor;letter-spacing:-0.1px;left:1858.0px;transform:translateX(-50%);">CALL SEGMENT</div>
<svg width="2048" height="1276"><g fill="#333"><path d="M1094.6,933.4 L1097.8,929.0 L1101.0,933.4 Z"/><path d="M1094.6,935.1999999999999 L1097.8,939.5999999999999 L1101.0,935.1999999999999 Z"/></g></svg>
<div class="t" style="top:927.0px;font-size:14px;-webkit-text-stroke:0.45px currentColor;letter-spacing:-0.2px;left:1105.6px;">Name</div>
<svg width="2048" height="1276"><g fill="#333"><path d="M1267.6,933.4 L1270.8,929.0 L1274.0,933.4 Z"/><path d="M1267.6,935.1999999999999 L1270.8,939.5999999999999 L1274.0,935.1999999999999 Z"/></g></svg>
<div class="t" style="top:927.0px;font-size:14px;-webkit-text-stroke:0.45px currentColor;letter-spacing:-0.1px;right:705.7px;margin-right:-0.1px;">Total Calls</div>
<div class="t" style="top:948.9px;font-size:9.6px;color:#888;letter-spacing:-0.1px;right:705.7px;margin-right:-0.1px;">SUM</div>
<svg width="2048" height="1276"><g fill="#333"><path d="M1395.2,933.4 L1398.4,929.0 L1401.6000000000001,933.4 Z"/><path d="M1395.2,935.1999999999999 L1398.4,939.5999999999999 L1401.6000000000001,935.1999999999999 Z"/></g></svg>
<div class="t" style="top:927.0px;font-size:14px;-webkit-text-stroke:0.45px currentColor;letter-spacing:-0.1px;right:581.0px;margin-right:-0.1px;">Answered</div>
<div class="t" style="top:948.9px;font-size:9.6px;color:#888;letter-spacing:-0.1px;right:581.0px;margin-right:-0.1px;">SUM</div>
<svg width="2048" height="1276"><g fill="#333"><path d="M1494.8,933.4 L1498,929.0 L1501.2,933.4 Z"/><path d="M1494.8,935.1999999999999 L1498,939.5999999999999 L1501.2,935.1999999999999 Z"/></g></svg>
<div class="t" style="top:927.0px;font-size:14px;-webkit-text-stroke:0.45px currentColor;letter-spacing:-0.1px;right:455.4px;margin-right:-0.1px;">Not Answered</div>
<div class="t" style="top:948.9px;font-size:9.6px;color:#888;letter-spacing:-0.1px;right:455.4px;margin-right:-0.1px;">SUM</div>
<svg width="2048" height="1276"><g fill="#333"><path d="M1650.3999999999999,933.4 L1653.6,929.0 L1656.8,933.4 Z"/><path d="M1650.3999999999999,935.1999999999999 L1653.6,939.5999999999999 L1656.8,935.1999999999999 Z"/></g></svg>
<div class="t" style="top:927.0px;font-size:14px;-webkit-text-stroke:0.45px currentColor;letter-spacing:-0.1px;right:330.4px;margin-right:-0.1px;">Holds On</div>
<div class="t" style="top:948.9px;font-size:9.6px;color:#888;letter-spacing:-0.1px;right:330.4px;margin-right:-0.1px;">SUM</div>
<svg width="2048" height="1276"><g fill="#333"><path d="M1772.2,933.4 L1775.4,929.0 L1778.6000000000001,933.4 Z"/><path d="M1772.2,935.1999999999999 L1775.4,939.5999999999999 L1778.6000000000001,935.1999999999999 Z"/></g></svg>
<div class="t" style="top:927.0px;font-size:14px;-webkit-text-stroke:0.45px currentColor;letter-spacing:-0.1px;right:218.6px;margin-right:-0.1px;">Ringing</div>
<div class="t" style="top:948.9px;font-size:9.6px;color:#888;letter-spacing:-0.1px;right:220.7px;margin-right:-0.1px;">AVG</div>
<svg width="2048" height="1276"><g fill="#333"><path d="M1905.8,933.4 L1909,929.0 L1912.2,933.4 Z"/><path d="M1905.8,935.1999999999999 L1909,939.5999999999999 L1912.2,935.1999999999999 Z"/></g></svg>
<div class="t" style="top:927.0px;font-size:14px;-webkit-text-stroke:0.45px currentColor;letter-spacing:-0.1px;right:77.6px;margin-right:-0.1px;">Live Talk</div>
<div class="t" style="top:948.9px;font-size:9.6px;color:#888;letter-spacing:-0.1px;right:77.6px;margin-right:-0.1px;">AVG</div>
<div class="b" style="left:1084.7px;top:1016.2px;width:894.8px;height:1.0px;background:#e6e6e6;"></div>
<div class="b" style="left:1084.7px;top:1064.1px;width:894.8px;height:1.0px;background:#e6e6e6;"></div>
<div class="b" style="left:1084.7px;top:1112.1px;width:894.8px;height:1.0px;background:#e6e6e6;"></div>
<div class="b" style="left:1084.7px;top:1160.4px;width:894.8px;height:1.0px;background:#e6e6e6;"></div>
<div class="t" style="top:976.6px;font-size:14px;letter-spacing:-0.2px;left:1095.5px;">Tristan Dave Buenaflor</div>
<div class="t" style="top:994.6px;font-size:12.6px;color:#7a7a7a;letter-spacing:-0.1px;left:1095.5px;">Ext. 2927</div>
<div class="t" style="top:983.7px;font-size:14px;letter-spacing:-0.1px;right:707.8px;margin-right:-0.1px;">74</div>
<div class="t" style="top:983.7px;font-size:14px;letter-spacing:-0.1px;right:581.0px;margin-right:-0.1px;">58</div>
<div class="t" style="top:983.7px;font-size:14px;letter-spacing:-0.1px;right:454.8px;margin-right:-0.1px;">16</div>
<div class="t" style="top:983.7px;font-size:14px;letter-spacing:-0.1px;right:330.0px;margin-right:-0.1px;">28</div>
<div class="t" style="top:983.7px;font-size:14px;letter-spacing:-0.1px;right:216.0px;margin-right:-0.1px;">00:03:23</div>
<div class="t" style="top:983.7px;font-size:14px;letter-spacing:-0.1px;right:76.8px;margin-right:-0.1px;">00:44:18</div>
<div class="t" style="top:1025.1px;font-size:14px;letter-spacing:-0.2px;left:1095.5px;">Geraldine Sambu</div>
<div class="t" style="top:1043.1px;font-size:12.6px;color:#7a7a7a;letter-spacing:-0.1px;left:1095.5px;">Ext. 382</div>
<div class="t" style="top:1032.2px;font-size:14px;letter-spacing:-0.1px;right:707.8px;margin-right:-0.1px;">72</div>
<div class="t" style="top:1032.2px;font-size:14px;letter-spacing:-0.1px;right:581.0px;margin-right:-0.1px;">27</div>
<div class="t" style="top:1032.2px;font-size:14px;letter-spacing:-0.1px;right:454.8px;margin-right:-0.1px;">45</div>
<div class="t" style="top:1032.2px;font-size:14px;letter-spacing:-0.1px;right:330.0px;margin-right:-0.1px;">15</div>
<div class="t" style="top:1032.2px;font-size:14px;letter-spacing:-0.1px;right:216.0px;margin-right:-0.1px;">00:04:03</div>
<div class="t" style="top:1032.2px;font-size:14px;letter-spacing:-0.1px;right:76.8px;margin-right:-0.1px;">00:23:26</div>
<div class="t" style="top:1073.8px;font-size:14px;letter-spacing:-0.2px;left:1095.5px;">Lorely Yarcia</div>
<div class="t" style="top:1091.8px;font-size:12.6px;color:#7a7a7a;letter-spacing:-0.1px;left:1095.5px;">Ext. 10289</div>
<div class="t" style="top:1083.0px;font-size:14px;letter-spacing:-0.1px;right:707.8px;margin-right:-0.1px;">67</div>
<div class="t" style="top:1083.0px;font-size:14px;letter-spacing:-0.1px;right:581.0px;margin-right:-0.1px;">66</div>
<div class="t" style="top:1083.0px;font-size:14px;letter-spacing:-0.1px;right:454.8px;margin-right:-0.1px;">1</div>
<div class="t" style="top:1083.0px;font-size:14px;letter-spacing:-0.1px;right:330.0px;margin-right:-0.1px;">0</div>
<div class="t" style="top:1083.0px;font-size:14px;letter-spacing:-0.1px;right:216.0px;margin-right:-0.1px;">00:02:08</div>
<div class="t" style="top:1083.0px;font-size:14px;letter-spacing:-0.1px;right:76.8px;margin-right:-0.1px;">03:30:47</div>
<div class="t" style="top:1120.1px;font-size:14px;letter-spacing:-0.2px;left:1095.5px;">Mary Ann Hernandez</div>
<div class="t" style="top:1138.1px;font-size:12.6px;color:#7a7a7a;letter-spacing:-0.1px;left:1095.5px;">Ext. 2349</div>
<div class="t" style="top:1128.4px;font-size:14px;letter-spacing:-0.1px;right:707.8px;margin-right:-0.1px;">66</div>
<div class="t" style="top:1128.4px;font-size:14px;letter-spacing:-0.1px;right:581.0px;margin-right:-0.1px;">64</div>
<div class="t" style="top:1128.4px;font-size:14px;letter-spacing:-0.1px;right:454.8px;margin-right:-0.1px;">2</div>
<div class="t" style="top:1128.4px;font-size:14px;letter-spacing:-0.1px;right:330.0px;margin-right:-0.1px;">0</div>
<div class="t" style="top:1128.4px;font-size:14px;letter-spacing:-0.1px;right:216.0px;margin-right:-0.1px;">00:01:00</div>
<div class="t" style="top:1128.4px;font-size:14px;letter-spacing:-0.1px;right:76.8px;margin-right:-0.1px;">00:30:02</div>
<div class="t" style="top:1168.4px;font-size:14px;letter-spacing:-0.2px;left:1095.5px;">John Edwin Baua</div>
<div class="t" style="top:1186.4px;font-size:12.6px;color:#7a7a7a;letter-spacing:-0.1px;left:1095.5px;">Ext. 404</div>
<div class="t" style="top:1178.9px;font-size:14px;letter-spacing:-0.1px;right:707.8px;margin-right:-0.1px;">65</div>
<div class="t" style="top:1178.9px;font-size:14px;letter-spacing:-0.1px;right:581.0px;margin-right:-0.1px;">63</div>
<div class="t" style="top:1178.9px;font-size:14px;letter-spacing:-0.1px;right:454.8px;margin-right:-0.1px;">2</div>
<div class="t" style="top:1178.9px;font-size:14px;letter-spacing:-0.1px;right:330.0px;margin-right:-0.1px;">0</div>
<div class="t" style="top:1178.9px;font-size:14px;letter-spacing:-0.1px;right:216.0px;margin-right:-0.1px;">00:01:19</div>
<div class="t" style="top:1178.9px;font-size:14px;letter-spacing:-0.1px;right:76.8px;margin-right:-0.1px;">02:46:01</div>
</body></html>
